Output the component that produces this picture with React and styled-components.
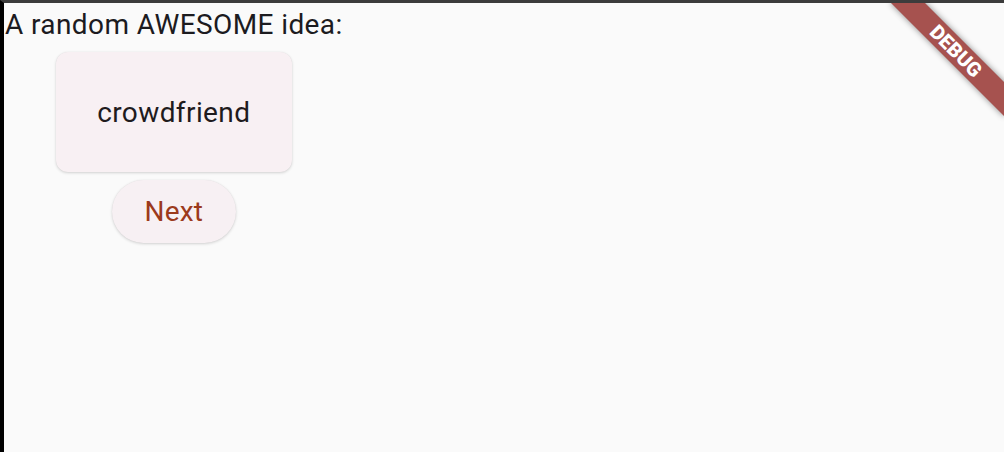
import React from 'react';
import styled, { createGlobalStyle } from 'styled-components';

const GlobalStyle = createGlobalStyle`
  html, body {
    margin: 0;
    padding: 0;
    background: #fafafa;
  }
  body {
    font-family: Roboto, 'Liberation Sans', sans-serif;
  }
`;

const Frame = styled.div`
  position: relative;
  box-sizing: border-box;
  height: 100vh;
  overflow: hidden;
  background: #fafafa;
  border-top: 3px solid #3c3c3c;
  border-left: 4px solid #000;
`;

const Column = styled.div`
  display: inline-flex;
  flex-direction: column;
  align-items: center;
  padding: 0 1px;
`;

const Heading = styled.div`
  font-size: 28px;
  line-height: 33px;
  letter-spacing: 0.4px;
  padding-top: 5px;
  color: #1c1b1f;
  white-space: nowrap;
`;

const IdeaCard = styled.div`
  box-sizing: border-box;
  width: 236px;
  height: 120px;
  margin-top: 11px;
  display: flex;
  align-items: center;
  justify-content: center;
  background: #f8f0f3;
  border-radius: 12px;
  box-shadow: 0 1px 3px rgba(0, 0, 0, 0.16), 0 0 1px rgba(0, 0, 0, 0.08);
  font-size: 28px;
  letter-spacing: 0.4px;
  color: #1f1b1d;
`;

const NextButton = styled.button`
  box-sizing: border-box;
  width: 124px;
  height: 63px;
  margin-top: 8px;
  padding: 0;
  border: none;
  border-radius: 32px;
  background: #f7f0f3;
  box-shadow: 0 1px 3px rgba(0, 0, 0, 0.16), 0 0 1px rgba(0, 0, 0, 0.08);
  font-family: Roboto, 'Liberation Sans', sans-serif;
  font-size: 28px;
  letter-spacing: 0.2px;
  color: #9c3a1c;
  cursor: pointer;
`;

const Ribbon = styled.div`
  position: absolute;
  top: 36px;
  left: 872px;
  width: 160px;
  height: 24px;
  transform: rotate(45deg);
  background: #a6524f;
  box-shadow: 0 0 6px rgba(0, 0, 0, 0.45);
  display: flex;
  align-items: center;
  justify-content: center;
  font-family: Roboto, 'DejaVu Sans', sans-serif;
  font-weight: 900;
  font-size: 20px;
  line-height: 1;
  color: #fff;
`;

export default function App() {
  return (
    <>
      <GlobalStyle />
      <Frame>
        <Column>
          <Heading>A random AWESOME idea:</Heading>
          <IdeaCard>crowdfriend</IdeaCard>
          <NextButton>Next</NextButton>
        </Column>
        <Ribbon>DEBUG</Ribbon>
      </Frame>
    </>
  );
}
